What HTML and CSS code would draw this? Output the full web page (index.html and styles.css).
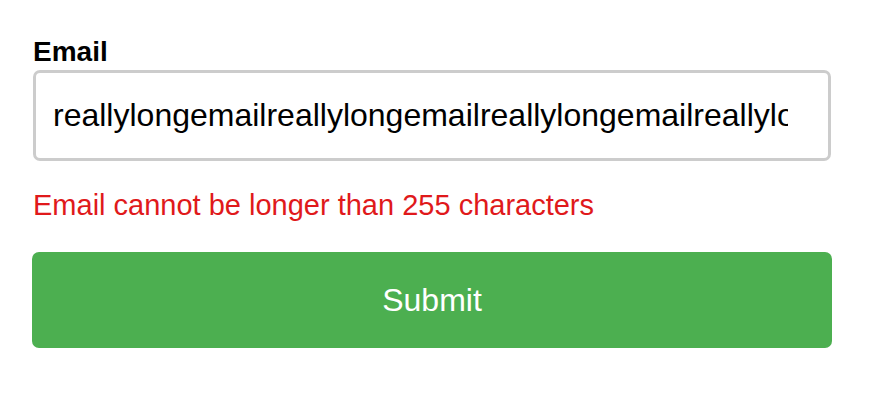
FILE: index.html
```html
<!DOCTYPE html>
<html>
<head>
<meta charset="utf-8">
<link rel="stylesheet" href="styles.css">
</head>
<body>
<form class="form">
  <label class="label" for="email">Email</label>
  <input class="input" id="email" type="text" value="reallylongemailreallylongemailreallylongemailreallylongemail@example.com">
  <div class="error">Email cannot be longer than 255 characters</div>
  <button class="submit" type="button">Submit</button>
</form>
</body>
</html>
```
FILE: styles.css
```css
html, body {
  margin: 0;
  padding: 0;
  background: #fff;
}
body {
  font-family: "Liberation Sans", Arial, sans-serif;
}
.form {
  display: flex;
  flex-direction: column;
  padding: 36px 58px 0 32px;
  width: 800px;
}
.label {
  font-size: 28px;
  font-weight: bold;
  color: #000;
  line-height: 32px;
  margin-left: 1px;
  margin-bottom: 2px;
}
.input {
  box-sizing: border-box;
  height: 91px;
  width: 798px;
  margin: 0 0 0 1px;
  border: 3px solid #cccccc;
  border-radius: 7px;
  padding: 0 40px 0 17px;
  font-family: "Liberation Sans", Arial, sans-serif;
  font-size: 32px;
  color: #000;
  outline: none;
}
.error {
  color: #e0191b;
  font-size: 29px;
  line-height: 32px;
  margin-top: 28px;
  margin-left: 1px;
}
.submit {
  margin-top: 31px;
  height: 96px;
  width: 800px;
  border: none;
  border-radius: 7px;
  background: #4caf50;
  color: #fff;
  font-family: "Liberation Sans", Arial, sans-serif;
  font-size: 32px;
}
```
